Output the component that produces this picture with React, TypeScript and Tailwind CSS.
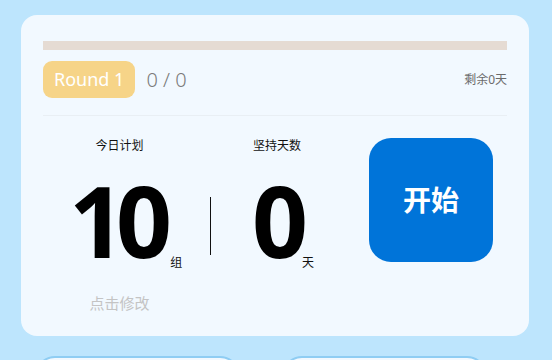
export default function App() {
  return (
    <div
      className="w-[552px] h-[360px] overflow-hidden bg-[#bde5fd] pt-[15px] pl-[21px] pr-[23px]"
      style={{ fontFamily: '"Noto Sans", "Noto Sans CJK SC", sans-serif' }}
    >
      <div className="bg-[#f2f9ff] rounded-[16px] px-[22px] pt-[26px] pb-[23px]">
        {/* progress */}
        <div className="h-[9px] bg-[#e5dbd3]" />

        <div className="flex items-center mt-[11px]">
          <div className="h-[37px] px-[11px] rounded-[9px] bg-[#f6d488] text-white text-[18px] leading-[37px]">
            Round 1
          </div>
          <span className="ml-[11px] text-[20px] font-light text-[#7b7b7b]">0 / 0</span>
          <span className="ml-auto text-[12px] text-[#6b6b6b]">剩余0天</span>
        </div>

        <div className="h-px bg-[#e9eff4] mt-[17px]" />

        <div className="flex mt-[22px]">
          <div className="w-[153px] flex flex-col items-center">
            <div className="mt-[2px] text-[12px] leading-[12px] text-[#111]">今日计划</div>
            <div className="mt-[2px] flex items-end self-start pl-[26px]">
              <span className="text-[98px] leading-[1.362] font-bold tracking-[-9px] text-black">10</span>
              <span className="ml-[7px] mb-[16px] text-[12px] leading-[16px] text-[#111]">组</span>
            </div>
            <div className="mt-[6px] text-[15px] leading-[20px] text-[#c4c4c4]">点击修改</div>
          </div>

          <div className="ml-[14px] mt-[59px] w-px h-[58px] bg-[#111]" />

          <div className="w-[132px] flex flex-col items-center">
            <div className="mt-[2px] text-[12px] leading-[12px] text-[#111]">坚持天数</div>
            <div className="mt-[2px] flex items-end self-start pl-[41px]">
              <span className="text-[98px] leading-[1.362] font-bold tracking-[-10px] text-black">0</span>
              <span className="ml-[4px] mb-[16px] text-[12px] leading-[16px] text-[#111]">天</span>
            </div>
          </div>

          <button className="ml-auto mr-[14px] w-[124px] h-[124px] rounded-[22px] bg-[#0074d9] text-white text-[28px] font-bold flex items-center justify-center">
            开始
          </button>
        </div>
      </div>

      <div className="flex mt-[20px]">
        <div className="ml-[14px] w-[205px] h-[40px] rounded-[22px] border-2 border-[#8fcdf3] bg-[#f2f9ff]" />
        <div className="ml-[42px] w-[205px] h-[40px] rounded-[22px] border-2 border-[#8fcdf3] bg-[#f2f9ff]" />
      </div>
    </div>
  );
}
